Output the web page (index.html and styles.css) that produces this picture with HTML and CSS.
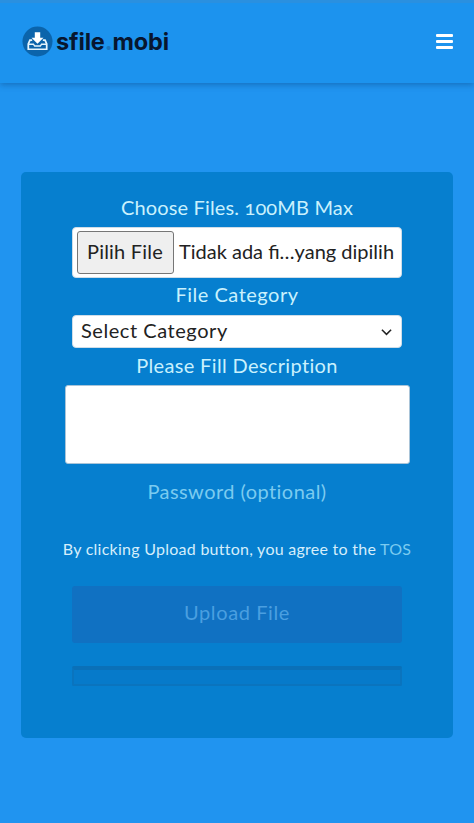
FILE: index.html
```html
<!DOCTYPE html>
<html lang="id">
<head>
<meta charset="utf-8">
<title>sfile.mobi</title>
<link rel="stylesheet" href="styles.css">
</head>
<body>
<header class="navbar">
  <a class="brand" href="#">
    <svg class="logo" viewBox="0 0 32 32" aria-hidden="true">
      <circle cx="16" cy="16" r="15.500" fill="#0b64ab"/>
      <path d="M13.200 6.500h5.600v5.500h3.400L16 18.200 9.800 12h3.400z" fill="#fff"/>
      <path d="M10.500 14.500H8.200L6.500 18.500v5.500h19v-5.500l-1.700-4h-2.300" fill="none" stroke="#e6f5fd" stroke-width="1.800"/>
      <path d="M6.500 18.800h5.300l1.300 1.900h5.800l1.300-1.900h5.300" fill="none" stroke="#e6f5fd" stroke-width="1.500"/>
    </svg>
    <span class="brand-name">sfile<span class="dot">.</span>mobi</span>
  </a>
  <button class="menu" aria-label="Menu"><span></span><span></span><span></span></button>
</header>
<main class="card">
  <form class="form">
    <label class="label first">Choose Files. 100MB Max</label>
    <div class="file-input">
      <button type="button" class="file-btn">Pilih File</button>
      <span class="file-name">Tidak ada fi…yang dipilih</span>
    </div>
    <label class="label cat">File Category</label>
    <div class="select">
      <span class="select-text">Select Category</span>
      <svg class="chev" viewBox="0 0 12 8" aria-hidden="true"><path d="M1 1.500l5 5 5-5" fill="none" stroke="#222" stroke-width="1.700"/></svg>
    </div>
    <label class="label desc">Please Fill Description</label>
    <div class="textarea"></div>
    <div class="password">Password (optional)</div>
    <p class="tos">By clicking Upload button, you agree to the <a href="#">TOS</a></p>
    <button type="button" class="upload">Upload File</button>
    <div class="progress"></div>
  </form>
</main>
</body>
</html>
```
FILE: styles.css
```css
* { box-sizing: border-box; }
html, body { margin: 0; height: 100%; }
body {
  background: #2094f0;
  font-family: Lato, "Open Sans", sans-serif;
  overflow: hidden;
}
.navbar {
  height: 83px;
  background: #1c93ee;
  border-top: 3px solid #2a90e0;
  box-shadow: 0 2px 6px rgba(10, 70, 130, .45);
  display: flex;
  align-items: center;
  justify-content: space-between;
  padding: 0 21px 4px 22px;
}
.brand { display: flex; align-items: center; gap: 3px; text-decoration: none; }
.logo { width: 31px; height: 31px; }
.brand-name {
  font-family: Inter, sans-serif;
  font-weight: 700;
  font-size: 23.500px;
  letter-spacing: -.15px;
  color: #07162f;
}
.dot { color: #1a75c0; }
.menu {
  width: 17px;
  height: 15px;
  padding: 0;
  background: none;
  border: 0;
  display: flex;
  flex-direction: column;
  justify-content: space-between;
}
.menu span { display: block; height: 3px; background: #fff; border-radius: 1px; }
.card {
  margin: 89px 21px 0;
  height: 566px;
  background: #067fcf;
  border-radius: 5px;
  padding-top: 23px;
}
.form { display: flex; flex-direction: column; align-items: center; }
.label {
  color: #c9f1fd;
  font-size: 20px;
  line-height: 24px;
  letter-spacing: .15px;
  text-align: center;
  font-feature-settings: "onum";
}
.first { margin-bottom: 8px; }
.file-input {
  width: 330px;
  height: 51px;
  background: #fff;
  border-radius: 4px;
  border: 1px solid #cfdde8;
  display: flex;
  align-items: center;
  padding-left: 4px;
  gap: 5px;
  color: #222;
  font-size: 20px;
  white-space: nowrap;
}
.file-btn {
  width: 97px;
  height: 43px;
  padding: 0 1px 3px 0;
  background: #efefef;
  border: 1px solid #767676;
  border-radius: 3px;
  color: #222;
  font: inherit;
  letter-spacing: .2px;
}
.file-name { padding-bottom: 4px; }
.cat { margin-top: 4px; margin-bottom: 9px; letter-spacing: .5px; }
.select {
  width: 330px;
  height: 33px;
  background: #fff;
  border-radius: 4px;
  border: 1px solid #cfdde8;
  color: #222;
  font-size: 20px;
  padding: 0 8px;
  display: flex;
  align-items: center;
  justify-content: space-between;
}
.select-text { letter-spacing: .55px; padding-bottom: 4px; }
.chev { width: 11px; height: 8px; margin-right: 1px; }
.desc { margin-top: 5px; margin-bottom: 8px; letter-spacing: .35px; }
.textarea {
  width: 345px;
  height: 79px;
  background: #fff;
  border-radius: 3px;
  border: 1px solid #a9c4d8;
}
.password {
  margin-top: 15px;
  color: #7bcbf0;
  font-size: 20px;
  line-height: 24px;
  letter-spacing: .45px;
}
.tos {
  margin: 36px 0 0;
  color: #d5eefb;
  font-size: 16px;
  line-height: 20px;
  letter-spacing: .26px;
}
.tos a { color: #7bcbf0; text-decoration: none; }
.upload {
  margin-top: 27px;
  width: 330px;
  height: 57px;
  padding: 0 0 5px;
  background: #1071c2;
  border: 0;
  border-radius: 3px;
  color: #4a9fe0;
  font: inherit;
  font-size: 20px;
  letter-spacing: .6px;
}
.progress {
  margin-top: 23px;
  width: 330px;
  height: 20px;
  background: #067aca;
  border: 2px solid #0a74be;
  border-top: 4px solid #0a70b8;
  border-radius: 2px;
}
```
